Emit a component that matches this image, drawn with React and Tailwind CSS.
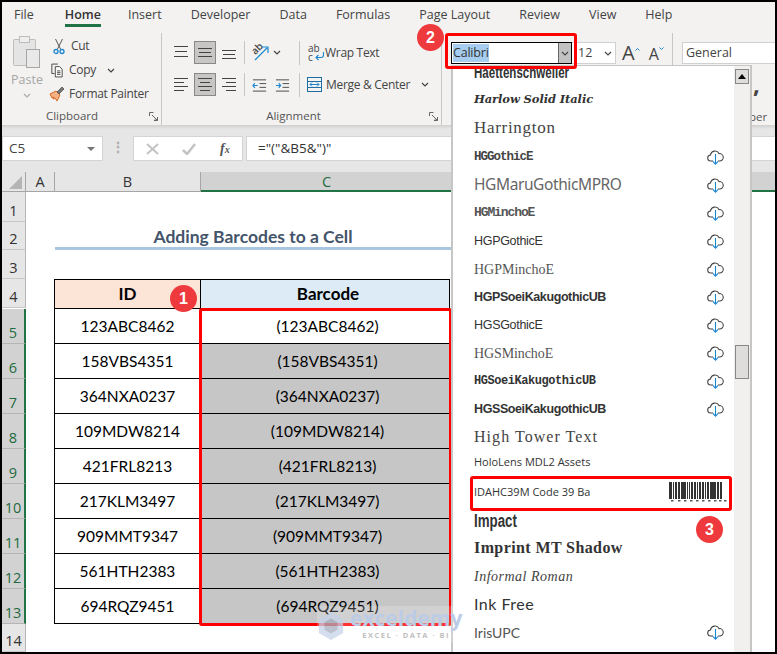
const ui = "font-['Open_Sans',sans-serif]";
const sheet = "font-['Lato',sans-serif]";

const tabs = ["File", "Home", "Insert", "Developer", "Data", "Formulas", "Page Layout", "Review", "View", "Help"];

const rows = [
  ["123ABC8462", "(123ABC8462)"],
  ["158VBS4351", "(158VBS4351)"],
  ["364NXA0237", "(364NXA0237)"],
  ["109MDW8214", "(109MDW8214)"],
  ["421FRL8213", "(421FRL8213)"],
  ["217KLM3497", "(217KLM3497)"],
  ["909MMT9347", "(909MMT9347)"],
  ["561HTH2383", "(561HTH2383)"],
  ["694RQZ9451", "(694RQZ9451)"],
];

const fonts = [
  { name: "Haettenschweiler", h: "h-[28px]", cls: "font-['Liberation_Sans',sans-serif] font-bold text-[17px] scale-x-[0.68] origin-left text-[#333]" },
  { name: "Harlow Solid Italic", h: "h-[26px]", cls: "font-['DejaVu_Serif',serif] italic font-bold text-[11.5px] tracking-[-0.1px] text-[#333]" },
  { name: "Harrington", h: "h-[30px]", cls: "font-['Liberation_Serif',serif] text-[17px] tracking-[0.7px] text-[#444]" },
  { name: "HGGothicE", h: "h-[28px]", cloud: true, cls: "font-['Liberation_Mono',monospace] font-bold text-[12.5px] tracking-[-1px] text-[#444]" },
  { name: "HGMaruGothicMPRO", h: "h-[28px]", cloud: true, cls: "font-['Noto_Sans',sans-serif] text-[15.5px] tracking-[-0.4px] text-[#666]" },
  { name: "HGMinchoE", h: "h-[28px]", cloud: true, cls: "font-['Liberation_Mono',monospace] font-bold text-[13px] tracking-[-1.1px] text-[#555]" },
  { name: "HGPGothicE", h: "h-[28px]", cloud: true, cls: "font-['Liberation_Sans',sans-serif] text-[12.5px] tracking-[-0.3px] text-[#333]" },
  { name: "HGPMinchoE", h: "h-[28px]", cloud: true, cls: "font-['Liberation_Serif',serif] text-[14px] text-[#555]" },
  { name: "HGPSoeiKakugothicUB", h: "h-[28px]", cloud: true, cls: "font-['Liberation_Sans',sans-serif] font-bold text-[12.5px] tracking-[-0.4px] text-[#333]" },
  { name: "HGSGothicE", h: "h-[28px]", cloud: true, cls: "font-['Liberation_Sans',sans-serif] text-[12.5px] tracking-[-0.3px] text-[#333]" },
  { name: "HGSMinchoE", h: "h-[28px]", cloud: true, cls: "font-['Liberation_Serif',serif] text-[14px] tracking-[-0.1px] text-[#555]" },
  { name: "HGSoeiKakugothicUB", h: "h-[28px]", cloud: true, cls: "font-['Liberation_Mono',monospace] font-bold text-[12px] tracking-[-0.45px] text-[#333]" },
  { name: "HGSSoeiKakugothicUB", h: "h-[28px]", cloud: true, cls: "font-['Liberation_Sans',sans-serif] font-bold text-[12.5px] tracking-[-0.4px] text-[#333]" },
  { name: "High Tower Text", h: "h-[27px]", cls: "font-['Liberation_Serif',serif] text-[16px] tracking-[1.05px] text-[#444]" },
  { name: "HoloLens MDL2 Assets", h: "h-[25px]", cls: "font-['Open_Sans',sans-serif] text-[11px] text-[#333]" },
  { name: "IDAHC39M Code 39 Ba", h: "h-[34px]", barcode: true, cls: "font-['Open_Sans',sans-serif] text-[11px] text-[#333]" },
  { name: "Impact", h: "h-[25px]", cls: "font-['Liberation_Sans',sans-serif] font-bold text-[18px] scale-x-[0.74] origin-left text-[#333]" },
  { name: "Imprint MT Shadow", h: "h-[28px]", cls: "font-['Liberation_Serif',serif] font-bold text-[16px] tracking-[0.4px] text-[#333]" },
  { name: "Informal Roman", h: "h-[28px]", cls: "font-['Liberation_Serif',serif] italic text-[14px] tracking-[0.5px] text-[#444]" },
  { name: "Ink Free", h: "h-[28px]", cls: "font-['Lato',sans-serif] text-[16px] tracking-[0.5px] text-[#333]" },
  { name: "IrisUPC", h: "h-[28px]", cloud: true, cls: "font-['Lato',sans-serif] text-[14px] text-[#555]" },
];

const barWidths = [3, 1, 1, 1, 2, 1, 2, 1, 5, 1, 1, 1, 1, 1, 2, 1, 2, 1, 1, 1, 2, 1, 2, 1, 1, 1, 2, 1, 6, 1, 2, 1, 2];

function CloudIcon() {
  return (
    <svg width="17" height="16" viewBox="0 0 17 16" fill="none">
      <path d="M6 12H4a3 3 0 0 1-.5-6A4.5 4.5 0 0 1 12 4.6 3.7 3.7 0 0 1 13 12h-2" stroke="#444" strokeWidth="1.1" />
      <path d="M8.5 5v10M5.8 12.4l2.7 2.7 2.7-2.7" stroke="#1b86d0" strokeWidth="1.1" />
    </svg>
  );
}

function Barcode() {
  let x = 0;
  const bars = barWidths.map((w, i) => {
    const bar = i % 2 === 0 ? <rect key={i} x={x} y="0" width={w} height="17" fill="#333" /> : null;
    x += w;
    return bar;
  });
  return (
    <svg width="58" height="20" viewBox="0 0 58 20">
      {bars}
      {[2, 9, 15, 21, 27, 33, 39, 45, 50, 55].map((p) => (
        <rect key={p} x={p} y="18" width="2.5" height="1.5" fill="#555" />
      ))}
    </svg>
  );
}

function AlignLines({ lines, active }) {
  return (
    <div className={`w-[22px] h-[23px] flex items-center justify-center ${active ? "bg-[#c8c6c4] border border-[#8a8886]" : ""}`}>
      <svg width="16" height="17" viewBox="0 0 16 17" stroke="#444" strokeWidth="1" fill="none">
        {lines.map((l, i) => (
          <path key={i} d={`M${l[0]} ${l[1] + 0.5}H${l[2]}`} />
        ))}
      </svg>
    </div>
  );
}

function Chevron({ className = "" }) {
  return (
    <svg width="8" height="5" viewBox="0 0 8 5" fill="none" stroke="#444" strokeWidth="1.2" className={className}>
      <path d="M1 1l3 3 3-3" />
    </svg>
  );
}

function Launcher() {
  return (
    <svg width="9" height="9" viewBox="0 0 9 9" fill="none" stroke="#666" strokeWidth="1">
      <path d="M8.5 5v3.5H5M.5 4V.5h4M3 3l5 5M5.5 8h3V5" />
    </svg>
  );
}

function Badge({ n, className }) {
  return (
    <div className={`absolute w-[27px] h-[27px] rounded-full bg-[#ee3a3c] text-white flex items-center justify-center font-['Liberation_Sans',sans-serif] font-bold text-[16px] ${className}`}>
      {n}
    </div>
  );
}

function RowHead({ n, selected, h = "" }) {
  return (
    <div className={`w-[24px] shrink-0 flex items-end justify-center text-[14.5px] leading-[20px] border-b ${h} ${ui} ${selected ? "bg-[#d2d2d2] border-[#b5b5b5] text-[#1e6b41] border-r-2 border-r-[#217346]" : "bg-[#e6e6e6] border-[#c8c8c8] text-[#333] border-r border-r-[#b5b5b5]"}`}>
      {n}
    </div>
  );
}

function Ribbon() {
  return (
    <div className={`h-[95px] bg-[#f3f2f1] flex shrink-0 text-[12px] tracking-[-0.3px] text-[#444] ${ui}`}>
      {/* clipboard */}
      <div className="w-[160px] shrink-0 border-r border-[#c8c6c4] mt-[3px] flex flex-col">
        <div className="flex flex-1">
          <div className="w-[48px] flex flex-col items-center pt-[2px] pl-[2px] text-[12.5px] tracking-normal text-[#a6a6a6]">
            <svg width="30" height="34" viewBox="0 0 30 34" fill="none">
              <rect x="1.5" y="4.5" width="22" height="26" rx="1" fill="#e4e4e4" stroke="#bdbdbd" />
              <rect x="7.5" y="1.5" width="10" height="6" fill="#eee" stroke="#bdbdbd" />
              <rect x="14.5" y="14.5" width="13" height="18" fill="#e9e9e9" stroke="#a6a6a6" />
            </svg>
            <span className="mt-[3px] leading-[16px]">Paste</span>
            <Chevron className="mt-[5px] opacity-40" />
          </div>
          <div className="flex flex-col pt-[1px] leading-[24px]">
            <div className="flex items-center gap-[6px] pl-[3px] h-[24px]">
              <svg width="12" height="17" viewBox="0 0 12 17" fill="none" stroke="#555" strokeWidth="1">
                <path d="M2.5 1l5 10M9.5 1l-5 10" />
                <circle cx="3" cy="13.5" r="2" stroke="#1b86d0" strokeWidth="1.3" />
                <circle cx="9" cy="13.5" r="2" stroke="#1b86d0" strokeWidth="1.3" />
              </svg>
              <span>Cut</span>
            </div>
            <div className="flex items-center gap-[6px] pl-[1px] h-[24px]">
              <svg width="12" height="15" viewBox="0 0 14 17" fill="none" stroke="#444" strokeWidth="1.1">
                <path d="M8 1H1v11h3" />
                <path d="M5 4h5l3 3v9H5z" fill="#fff" />
                <path d="M7 9h4M7 11h4M7 13h4" />
              </svg>
              <span>Copy</span>
              <Chevron className="ml-[5px]" />
            </div>
            <div className="flex items-center gap-[4px] -ml-[1px] h-[24px]">
              <svg width="16" height="16" viewBox="0 0 16 16" fill="none">
                <path d="M1 8l6-3 4 4-3 6-2-3-2 1 1-2-2 1-1-2z" fill="#f4b183" stroke="#d8691f" />
                <path d="M8 6l5-5 2 2-5 5z" fill="#777" stroke="#444" strokeWidth="0.7" />
              </svg>
              <span className="whitespace-nowrap">Format Painter</span>
            </div>
          </div>
        </div>
        <div className="h-[16px] mb-[1px] relative flex items-center justify-center text-[11.5px] tracking-normal text-[#555] pr-[19px]">
          Clipboard
          <span className="absolute right-[3px] top-[4px] flex"><Launcher /></span>
        </div>
      </div>
      {/* alignment */}
      <div className="w-[280px] shrink-0 border-r border-[#c8c6c4] mt-[3px] flex flex-col">
        <div className="flex-1 flex flex-col pl-[2px] pt-[8px] gap-[9px]">
          <div className="flex items-center h-[23px]">
            <div className="flex items-center gap-[2px] pl-[6px] border-r border-[#c8c6c4] w-[81px]">
              <AlignLines lines={[[1, 2, 15], [2, 7, 14], [1, 12, 15]]} />
              <AlignLines active lines={[[1, 4, 15], [2, 8, 14], [1, 12, 15]]} />
              <AlignLines lines={[[1, 6, 15], [2, 10, 14], [1, 14, 15]]} />
            </div>
            <div className="w-[55px] border-r border-[#c8c6c4] flex items-center gap-[4px] pl-[6px] h-[24px]">
              <div className="relative w-[18px] h-[17px]">
                <span className="absolute left-0 top-[-1px] -rotate-45 text-[10px] leading-[11px] font-semibold tracking-normal text-[#444]">ab</span>
                <svg width="18" height="17" viewBox="0 0 18 17" fill="none" className="absolute left-0 top-0">
                  <path d="M4 16L16 4M10.5 3H17v6" stroke="#1b86d0" strokeWidth="1.2" />
                </svg>
              </div>
              <Chevron />
            </div>
            <div className="flex items-center gap-[1px] pl-[8px]">
              <div className="relative w-[16px] h-[17px] text-[10px] leading-[9px] tracking-normal text-[#444]">
                <span className="block">ab</span>
                <span className="block">c</span>
                <svg width="10" height="9" viewBox="0 0 10 9" fill="none" className="absolute left-[7px] top-[8px]">
                  <path d="M8.5 0v3a2.5 2.5 0 0 1-2.5 2.5H1M3.5 3L1 5.5 3.5 8" stroke="#1b86d0" strokeWidth="1.1" />
                </svg>
              </div>
              <span className="whitespace-nowrap">Wrap Text</span>
            </div>
          </div>
          <div className="flex items-center h-[23px]">
            <div className="flex items-center gap-[2px] pl-[6px] border-r border-[#c8c6c4] w-[81px]">
              <AlignLines lines={[[1, 2, 15], [1, 6, 11], [1, 10, 15], [1, 14, 11]]} />
              <AlignLines active lines={[[1, 2, 15], [3, 6, 13], [1, 10, 15], [3, 14, 13]]} />
              <AlignLines lines={[[1, 2, 15], [5, 6, 15], [1, 10, 15], [5, 14, 15]]} />
            </div>
            <div className="w-[55px] border-r border-[#c8c6c4] flex items-center gap-[8px] pl-[7px] h-[24px]">
              <svg width="15" height="14" viewBox="0 0 16 14" fill="none" stroke="#444">
                <path d="M1 1.5h14M8 5.5h7M8 9.5h7M1 13.5h14" />
                <path d="M6 7.5H1M3 5L1 7.5 3 10" stroke="#1b86d0" strokeWidth="1.2" />
              </svg>
              <svg width="15" height="14" viewBox="0 0 16 14" fill="none" stroke="#444">
                <path d="M1 1.5h14M8 5.5h7M8 9.5h7M1 13.5h14" />
                <path d="M1 7.5h5M4 5l2 2.5L4 10" stroke="#1b86d0" strokeWidth="1.2" />
              </svg>
            </div>
            <div className="flex items-center gap-[4px] pl-[7px]">
              <svg width="15" height="15" viewBox="0 0 15 15" fill="none" stroke="#1b86d0">
                <rect x="0.5" y="0.5" width="14" height="14" stroke="#1c6ea4" />
                <path d="M.5 4.5h14M.5 10.5h14" stroke="#1c6ea4" />
                <path d="M3 7.5h9M5 5.5l-2 2 2 2M10 5.5l2 2-2 2" />
              </svg>
              <span className="whitespace-nowrap">Merge &amp; Center</span>
              <Chevron className="ml-[7px]" />
            </div>
          </div>
        </div>
        <div className="h-[16px] mb-[1px] relative flex items-center justify-center text-[11.5px] tracking-normal text-[#555] pr-[16px]">
          Alignment
          <span className="absolute right-[3px] top-[4px] flex"><Launcher /></span>
        </div>
      </div>
      {/* font */}
      <div className="w-[231px] shrink-0 border-r border-[#c8c6c4] mt-[3px] flex items-start pl-[9px] pt-[9px] tracking-normal">
        <div className="w-[121px] h-[22px] bg-white border border-black flex">
          <div className="flex-1 p-[1px]">
            <span className="block w-[36px] h-full bg-[#a6cdf0] text-[12.5px] leading-[18px] tracking-[-0.2px] text-[#333]">Calibri</span>
          </div>
          <div className="w-[13px] bg-[#c2c2c2] border-l border-[#666] flex items-center justify-center"><Chevron /></div>
        </div>
        <div className="w-[44px] h-[22px] bg-white border border-[#d0d0d0] border-l-0 flex items-center justify-between pl-[6px] pr-[3px] text-[12.5px]">
          12 <Chevron />
        </div>
        <div className="flex items-start pl-[6px] h-[22px] text-[#444]">
          <span className="text-[20px] leading-[22px]">A</span>
          <svg width="5" height="4" viewBox="0 0 5 4" fill="none" stroke="#1b86d0" className="mt-[5px]"><path d="M.5 3.5l2-2 2 2" /></svg>
          <span className="text-[16px] leading-[24px] ml-[9px]">A</span>
          <svg width="5" height="4" viewBox="0 0 5 4" fill="none" stroke="#1b86d0" className="mt-[5px]"><path d="M.5.5l2 2 2-2" /></svg>
        </div>
      </div>
      {/* number */}
      <div className="flex-1 pl-[9px] pt-[12px] relative tracking-normal">
        <div className="h-[22px] bg-white border border-[#d0d0d0] border-r-0 text-[12.5px] leading-[20px] pl-[3px]">General</div>
        <span className="absolute left-[80px] top-[42px] text-[24px] leading-[24px] font-bold text-[#444]">,</span>
        <span className="absolute left-[76px] top-[80px] text-[11.5px] leading-[14px] text-[#555]">ber</span>
      </div>
    </div>
  );
}

export default function App() {
  return (
    <div className={`relative w-[777px] h-[654px] overflow-hidden border-2 border-black bg-white flex flex-col ${ui}`}>
      {/* tabs */}
      <div className="h-[28px] bg-[#f3f2f1] flex gap-[29px] pl-[12px] pt-[4px] shrink-0 text-[12.5px] leading-[18px] text-[#444]">
        {tabs.map((t) => (
          <div key={t} className={`h-[21px] whitespace-nowrap ${t === "Home" ? "border-b-[3px] border-[#217346] font-semibold text-[#333] ml-[2px] -mr-[2px]" : ""}`}>
            {t}
          </div>
        ))}
      </div>
      <Ribbon />

      {/* formula bar */}
      <div className="h-[47px] bg-[#e6e6e6] shrink-0 pt-[11px] flex text-[13.5px] text-[#444] shadow-[inset_0_3px_3px_-1px_#cfcfcf]">
        <div className="w-[101px] h-[25px] bg-white border border-[#d4d4d4] flex items-center justify-between pl-[6px] pr-[7px]">
          C5
          <span className="w-0 h-0 border-x-[4px] border-x-transparent border-t-[4px] border-t-[#777]" />
        </div>
        <div className="w-[30px] text-center text-[#aaa] font-bold leading-[22px]">⋮</div>
        <div className="w-[110px] h-[25px] bg-white border border-[#d4d4d4] flex items-center">
          <svg width="13" height="12" viewBox="0 0 13 12" stroke="#c3c3c3" strokeWidth="2" className="ml-[12px]"><path d="M1 1l11 10M12 1L1 11" /></svg>
          <svg width="14" height="12" viewBox="0 0 14 12" fill="none" stroke="#c3c3c3" strokeWidth="2.5" className="ml-[23px]"><path d="M1 7l4 4 8-10" /></svg>
          <span className="ml-[24px] italic font-['Liberation_Serif',serif] font-bold text-[14px] text-[#555]">f<span className="text-[10px]">x</span></span>
        </div>
        <div className="flex-1 h-[25px] ml-[3px] bg-white border border-[#d4d4d4] border-r-0 pl-[11px] leading-[23px] text-[#333]">
          ="("&amp;B5&amp;")"
        </div>
      </div>

      {/* column headers */}
      <div className="h-[20px] flex shrink-0 bg-[#e6e6e6] text-[14.5px] leading-[19px] text-[#333]">
        <div className="w-[24px] border-r border-b border-[#a6a6a6] relative">
          <span className="absolute right-[3px] bottom-[2px] w-0 h-0 border-l-[13px] border-l-transparent border-b-[13px] border-b-[#b5b5b5]" />
        </div>
        <div className="w-[29px] border-r border-b border-[#a6a6a6] text-center">A</div>
        <div className="w-[146px] border-r border-b border-[#a6a6a6] text-center">B</div>
        <div className="flex-1 bg-[#d2d2d2] border-b-2 border-[#217346] text-[#1e6b41] text-center pr-[323px]">C</div>
      </div>

      {/* sheet */}
      <div className={`flex-1 flex flex-col bg-white text-[15.5px] text-black ${sheet}`}>
        <div className="flex"><RowHead n="1" h="h-[30px]" /></div>
        <div className="flex">
          <RowHead n="2" h="h-[28px]" />
          <div className="ml-[29px] w-[396px] h-[28px] border-b-[3px] border-[#a9c5e0] text-center font-bold text-[#44546a] text-[17.5px] leading-[29px]">
            Adding Barcodes to a Cell
          </div>
        </div>
        <div className="flex"><RowHead n="3" h="h-[29px]" /></div>
        <div className="flex">
          <RowHead n="4" h="h-[29px]" />
          <div className="ml-[28px] w-[147px] h-[30px] bg-[#fce4d6] border border-black text-center font-bold text-[17px] leading-[28px]">ID</div>
          <div className="w-[250px] h-[30px] -ml-[1px] pl-[6px] bg-[#ddebf7] border border-black text-center font-bold text-[17px] leading-[28px]">Barcode</div>
        </div>
        {rows.map(([id, code], i) => (
          <div key={id} className="flex">
            <RowHead n={i + 5} selected h="h-[35px]" />
            <div className="ml-[28px] w-[147px] h-[35px] border-x border-b border-black text-center leading-[34px]">{id}</div>
            <div className={`w-[250px] h-[35px] -ml-[1px] pl-[6px] border-r border-b border-black text-center leading-[34px] ${i === 0 ? "bg-white" : "bg-[#c6c6c6]"}`}>{code}</div>
          </div>
        ))}
        <div className="flex flex-1"><RowHead n="14" /></div>
      </div>

      {/* selection outline */}
      <div className="absolute left-[197px] top-[306px] w-[253px] h-[318px] border-[3px] border-[#ff0000] rounded-[3px]" />

      {/* font dropdown */}
      <div className="absolute left-[449px] top-[63px] w-[301px] h-[589px] bg-white border-l-2 border-r-2 border-t border-[#c6c6c6] overflow-hidden flex">
        <div className="w-[281px] -mt-[7px] shrink-0">
          {fonts.map((f) => (
            <div key={f.name} className={`${f.h} flex items-center justify-between pl-[21px] pr-[10px] whitespace-nowrap`}>
              <span className={f.cls}>{f.name}</span>
              {f.cloud && <CloudIcon />}
              {f.barcode && <span className="flex -mr-[3px]"><Barcode /></span>}
            </div>
          ))}
        </div>
        <div className="w-[16px] bg-[#f1f0ef] relative">
          <div className="h-[15px] mt-[3px] mx-[1px] bg-[#dedddb] border border-[#8a8886] flex items-center justify-center">
            <span className="w-0 h-0 border-x-[4px] border-x-transparent border-b-[5px] border-b-black" />
          </div>
          <div className="absolute top-[279px] left-[1px] right-[1px] h-[34px] bg-[#dedddb] border border-[#8a8886]" />
        </div>
      </div>

      {/* red callouts */}
      <div className="absolute left-[443px] top-[31px] w-[132px] h-[36px] border-[3px] border-[#ff0000] rounded-[3px]" />
      <div className="absolute left-[468px] top-[474px] w-[262px] h-[35px] border-[3px] border-[#ff0000] rounded-[3px]" />
      <Badge n="1" className="left-[168px] top-[283px]" />
      <Badge n="2" className="left-[415px] top-[22px]" />
      <Badge n="3" className="left-[694px] top-[514px]" />

      {/* watermark */}
      <div className="absolute left-[315px] top-[604px] h-[36px] flex items-start gap-[5px] bg-white/20 pointer-events-none">
        <svg width="28" height="28" viewBox="0 0 28 30" className="mt-[6px] opacity-70">
          <path d="M14 0l13 7.5v15L14 30 1 22.5v-15z" fill="#c3d1e8" />
          <path d="M14 7l7 4v8l-7 4-7-4v-8z" fill="#a0a8b8" />
        </svg>
        <div className="flex flex-col items-center font-['Open_Sans',sans-serif] font-bold text-[#bccbe6]">
          <span className="text-[21px] leading-[24px]">exceldemy</span>
          <span className="text-[7.5px] leading-[10px] tracking-[1.5px] text-[#c0c0c0]">EXCEL · DATA · BI</span>
        </div>
      </div>
    </div>
  );
}
